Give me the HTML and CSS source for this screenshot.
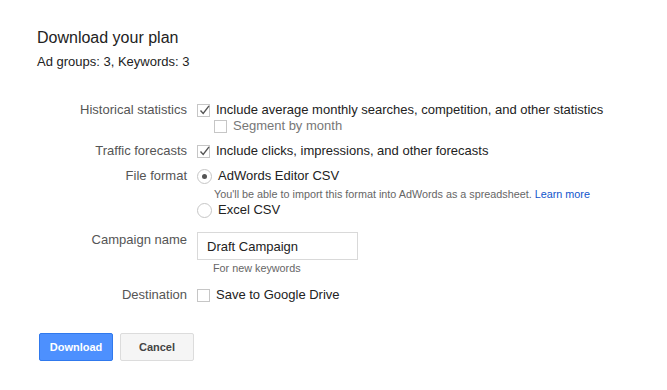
FILE: index.html
```html
<!DOCTYPE html>
<html lang="en">
<head>
    <meta charset="UTF-8">
    <meta name="viewport" content="width=device-width, initial-scale=1.0">
    <title>Download your plan</title>
    <link rel="stylesheet" href="styles.css">
</head>
<body>
    <div class="dialog">
        <h2 class="title">Download your plan</h2>
        <div class="summary">Ad groups: 3, Keywords: 3</div>

        <div class="form">
            <div class="row">
                <div class="label">Historical statistics</div>
                <div class="controls">
                    <div class="option">
                        <span class="check checked"><svg viewBox="0 0 13 13"><path d="M2.5 6.5 L5.2 9.5 L11 1.8" fill="none" stroke="#555" stroke-width="1.4"/></svg></span>
                        Include average monthly searches, competition, and other statistics
                    </div>
                    <div class="option sub muted">
                        <span class="check"></span>
                        Segment by month
                    </div>
                </div>
            </div>

            <div class="row">
                <div class="label">Traffic forecasts</div>
                <div class="controls">
                    <div class="option">
                        <span class="check checked"><svg viewBox="0 0 13 13"><path d="M2.5 6.5 L5.2 9.5 L11 1.8" fill="none" stroke="#555" stroke-width="1.4"/></svg></span>
                        Include clicks, impressions, and other forecasts
                    </div>
                </div>
            </div>

            <div class="row format">
                <div class="label">File format</div>
                <div class="controls">
                    <div class="option">
                        <span class="radio selected"></span>
                        AdWords Editor CSV
                    </div>
                    <div class="hint">You'll be able to import this format into AdWords as a spreadsheet. <a href="#">Learn more</a></div>
                    <div class="option">
                        <span class="radio"></span>
                        Excel CSV
                    </div>
                </div>
            </div>

            <div class="row campaign">
                <div class="label">Campaign name</div>
                <div class="controls">
                    <input class="text-input" type="text" value="Draft Campaign">
                    <div class="hint indent">For new keywords</div>
                </div>
            </div>

            <div class="row">
                <div class="label">Destination</div>
                <div class="controls">
                    <div class="option">
                        <span class="check"></span>
                        Save to Google Drive
                    </div>
                </div>
            </div>
        </div>

        <div class="buttons">
            <button class="btn primary">Download</button>
            <button class="btn">Cancel</button>
        </div>
    </div>
</body>
</html>
```

FILE: styles.css
```css
body {
    margin: 0;
    background: #fff;
    font-family: "Liberation Sans", Arial, sans-serif;
    color: #222;
}

.dialog {
    padding: 28px 0 0 37px;
}

.title {
    margin: 0;
    font-size: 16px;
    font-weight: normal;
    line-height: 20px;
    color: #222;
}

.summary {
    margin-top: 6px;
    font-size: 13px;
    line-height: 16px;
}

.form {
    margin-top: 32px;
    margin-left: -37px;
}

.row {
    display: flex;
    margin-bottom: 9px;
}

.row.format {
    margin-top: 1px;
}

.label {
    width: 197px;
    padding-right: 10px;
    box-sizing: border-box;
    text-align: right;
    font-size: 13px;
    line-height: 16px;
    color: #555;
    flex-shrink: 0;
}

.controls {
    display: flex;
    flex-direction: column;
}

.option {
    display: flex;
    align-items: center;
    font-size: 13px;
    line-height: 16px;
    color: #222;
}

.option.sub {
    margin-left: 17px;
}

.muted {
    color: #777;
}

.check {
    width: 11px;
    height: 11px;
    border: 1px solid #c6c6c6;
    background: #fff;
    margin-right: 6px;
    flex-shrink: 0;
    position: relative;
}

.check svg {
    position: absolute;
    left: 0;
    top: -1px;
    width: 13px;
    height: 13px;
}

.radio {
    width: 13px;
    height: 13px;
    border: 1px solid #c6c6c6;
    border-radius: 50%;
    background: #fff;
    margin-right: 6px;
    flex-shrink: 0;
    position: relative;
}

.radio.selected::after {
    content: "";
    position: absolute;
    left: 4px;
    top: 4px;
    width: 5px;
    height: 5px;
    border-radius: 50%;
    background: #555;
}

.hint {
    margin: 3px 0 1px 17px;
    font-size: 10.8px;
    line-height: 14px;
    color: #666;
}

.hint a {
    color: #15c;
    text-decoration: none;
}

.campaign {
    margin-top: 14px;
    margin-bottom: 12px;
}

.text-input {
    width: 161px;
    height: 28px;
    box-sizing: border-box;
    border: 1px solid #d9d9d9;
    padding: 0 9px;
    font-family: "Liberation Sans", Arial, sans-serif;
    font-size: 13px;
    color: #222;
    outline: none;
}

.hint.indent {
    margin: 1px 0 0 16px;
}

.buttons {
    display: flex;
    gap: 7px;
    margin-top: 30px;
    margin-left: 2px;
}

.btn {
    width: 74px;
    height: 28px;
    border: 1px solid #dcdcdc;
    border-radius: 2px;
    background: #f5f5f5;
    font-family: "Liberation Sans", Arial, sans-serif;
    font-size: 11px;
    font-weight: bold;
    color: #444;
    padding: 0;
}

.btn.primary {
    background: #4d90fe;
    border-color: #3079ed;
    color: #fff;
}
```
